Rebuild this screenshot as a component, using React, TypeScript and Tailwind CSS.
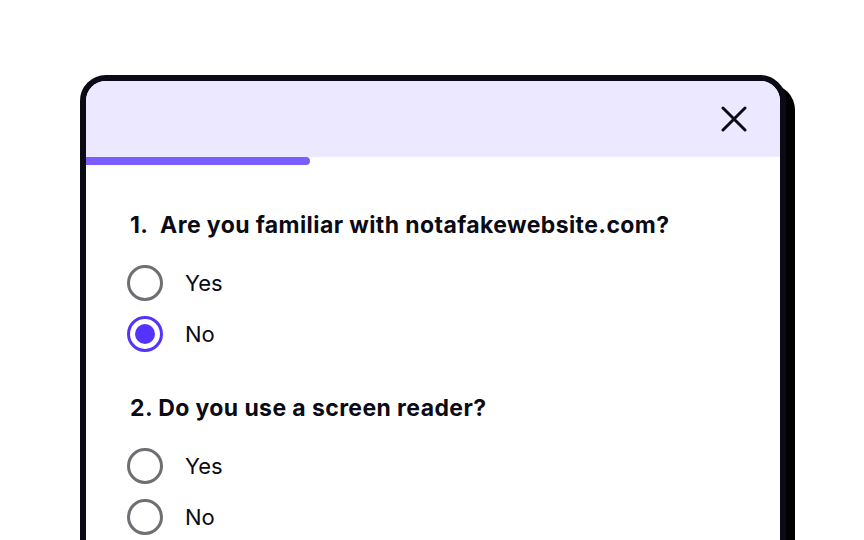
type Question = {
  num: string;
  text: string;
  options: string[];
  selected?: string;
};

const questions: Question[] = [
  { num: "1.\u00a0", text: "Are you familiar with notafakewebsite.com?", options: ["Yes", "No"], selected: "No" },
  { num: "2.", text: "Do you use a screen reader?", options: ["Yes", "No"] },
];

function Radio({ checked }: { checked: boolean }) {
  if (checked) {
    return (
      <span className="flex h-[36px] w-[36px] shrink-0 items-center justify-center rounded-full border-[3px] border-[#5533ff]">
        <span className="h-[20px] w-[20px] rounded-full bg-[#5533ff]" />
      </span>
    );
  }
  return <span className="h-[36px] w-[36px] shrink-0 rounded-full border-[3px] border-[#6e6e73]" />;
}

export default function App() {
  return (
    <div
      className="h-[540px] w-[864px] overflow-hidden bg-white pl-[80px] pt-[75px] text-[#0b0b16]"
      style={{ fontFamily: "Inter, 'Noto Sans', sans-serif" }}
    >
      <div className="h-[600px] w-[706px] overflow-hidden rounded-[26px] border-[6px] border-[#0b0b16] bg-white shadow-[9px_9px_0_#000]">
        <div className="flex h-[76px] items-center justify-end bg-[#ece8ff] pr-[33px]">
          <button aria-label="Close" className="flex h-[26px] w-[26px] items-center justify-center">
            <svg width="26" height="26" viewBox="0 0 26 26" fill="none">
              <path d="M2 2L24 24M24 2L2 24" stroke="#0b0b16" strokeWidth="3" strokeLinecap="round" />
            </svg>
          </button>
        </div>
        <div className="h-[8px] w-[224px] rounded-r-full bg-[#7b5cff]" />
        <div className="flex flex-col gap-[42px] pl-[44px] pt-[46px]">
          {questions.map((q) => (
            <fieldset key={q.num}>
              <legend className="text-[23px] font-bold leading-[28px] tracking-[0.4px]">
                {q.num} {q.text}
              </legend>
              <div className="-ml-[3px] mt-[26px] flex flex-col gap-[15px]">
                {q.options.map((o) => (
                  <label key={o} className="flex items-center gap-[22px] text-[22px] leading-[28px]">
                    <Radio checked={q.selected === o} />
                    <span>{o}</span>
                  </label>
                ))}
              </div>
            </fieldset>
          ))}
        </div>
      </div>
    </div>
  );
}
